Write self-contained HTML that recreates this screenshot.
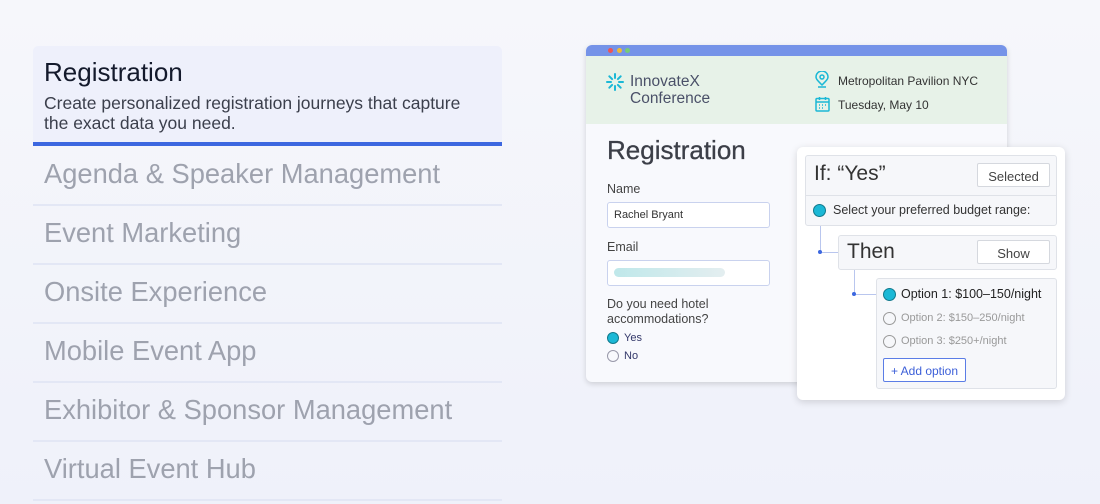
<!DOCTYPE html>
<html><head><style>
*{box-sizing:border-box;margin:0;padding:0}
body{width:1100px;height:504px;overflow:hidden;background:linear-gradient(180deg,#f6f7fb,#eff1fa);font-family:"Liberation Sans",sans-serif;position:relative}
.a{position:absolute}
.item{position:absolute;left:33px;width:469px;height:59px;border-bottom:2px solid #e3e7f5;color:#9ea2ae;font-size:27.3px;padding:11px 0 0 11px}
.box{position:absolute;background:#f6f7fa;border:1px solid #dfe2e8;border-radius:3px}
.btn{position:absolute;background:#fff;border:1px solid #d5d8de;border-radius:2px;font-size:13px;color:#444;text-align:center}
.r{position:absolute;width:13px;height:13px;border-radius:50%;border:1.5px solid #999}
.f{background:#1bb8d6;border-color:#11798c}
</style></head><body>
<div class="a" style="left:33px;top:46px;width:469px;height:100px;background:#eef0fb;border-radius:5px 5px 0 0;border-bottom:4px solid #3c67e0"></div>
<div class="a" style="left:44px;top:57px;font-size:26px;color:#141a2c">Registration</div>
<div class="a" style="left:44px;top:93px;font-size:17.5px;color:#3b3f4c;line-height:20px;width:430px">Create personalized registration journeys that capture the exact data you need.</div>
<div class="item" style="top:147px">Agenda &amp; Speaker Management</div>
<div class="item" style="top:206px">Event Marketing</div>
<div class="item" style="top:265px">Onsite Experience</div>
<div class="item" style="top:324px">Mobile Event App</div>
<div class="item" style="top:383px">Exhibitor &amp; Sponsor Management</div>
<div class="item" style="top:442px">Virtual Event Hub</div>

<div class="a" style="left:586px;top:45px;width:421px;height:337px;background:#f8f9fd;border-radius:6px;box-shadow:0 2px 6px rgba(0,0,0,.15);overflow:hidden">
 <div style="height:11px;background:#7593e8"></div>
 <div style="height:68px;background:#e7f2e8"></div>
</div>
<div class="a" style="left:608px;top:48px;width:5px;height:5px;border-radius:50%;background:#e55"></div>
<div class="a" style="left:617px;top:48px;width:5px;height:5px;border-radius:50%;background:#eb3"></div>
<div class="a" style="left:625px;top:48px;width:5px;height:5px;border-radius:50%;background:#7c7"></div>
<svg class="a" style="left:606px;top:73px" width="18" height="18" viewBox="0 0 18 18" stroke="#1bb8d6" stroke-width="2" stroke-linecap="round"><path d="M9 1v4M9 13v4M1 9h4M13 9h4M3.3 3.3l2.8 2.8M11.9 11.9l2.8 2.8M3.3 14.7l2.8-2.8M11.9 6.1l2.8-2.8"/></svg>
<div class="a" style="left:630px;top:73px;font-size:15.5px;line-height:17px;color:#4a5068">InnovateX<br>Conference</div>
<svg class="a" style="left:814px;top:71px" width="16" height="18" viewBox="0 0 16 18" fill="none" stroke="#1bb8d6" stroke-width="1.5"><path d="M8 14C4 10 2 8 2 6a6 6 0 0 1 12 0c0 2-2 4-6 8z"/><circle cx="8" cy="6" r="2"/><path d="M4 16h8"/></svg>
<div class="a" style="left:838px;top:74px;font-size:12px;color:#333">Metropolitan Pavilion NYC</div>
<svg class="a" style="left:815px;top:96px" width="15" height="16" viewBox="0 0 15 16" fill="none" stroke="#1bb8d6" stroke-width="1.5"><rect x="1" y="2.5" width="13" height="12.5" rx="1"/><path d="M1 6h13M4.5 1v3M10.5 1v3M4 9h1M7 9h1M10 9h1M4 12h1M7 12h1"/></svg>
<div class="a" style="left:838px;top:98px;font-size:12px;color:#333">Tuesday, May 10</div>
<div class="a" style="left:607px;top:135px;font-size:26px;color:#3c3f48;-webkit-text-stroke:0.3px #3c3f48">Registration</div>
<div class="a" style="left:607px;top:182px;font-size:12.5px;color:#444">Name</div>
<div class="a" style="left:607px;top:202px;width:163px;height:26px;background:#fff;border:1px solid #c9d2ee;border-radius:3px;font-size:11px;padding:6px 0 0 6px;color:#333">Rachel Bryant</div>
<div class="a" style="left:607px;top:240px;font-size:12.5px;color:#444">Email</div>
<div class="a" style="left:607px;top:260px;width:163px;height:26px;background:#fff;border:1px solid #c9d2ee;border-radius:3px"></div>
<div class="a" style="left:614px;top:268px;width:111px;height:9px;border-radius:5px;background:linear-gradient(90deg,#bfe8ea,#e4eef0)"></div>
<div class="a" style="left:607px;top:297px;font-size:12.5px;line-height:15px;color:#444">Do you need hotel<br>accommodations?</div>
<div class="r f" style="left:607px;top:332px;width:12px;height:12px"></div>
<div class="a" style="left:624px;top:332px;font-size:11px;color:#33386a">Yes</div>
<div class="r" style="left:607px;top:350px;width:12px;height:12px;border-color:#99a"></div>
<div class="a" style="left:624px;top:350px;font-size:11px;color:#33386a">No</div>

<div class="a" style="left:797px;top:147px;width:268px;height:253px;background:#fff;border-radius:6px;box-shadow:0 2px 8px rgba(0,0,0,.15)"></div>
<div class="box" style="left:805px;top:155px;width:252px;height:71px"></div>
<div class="a" style="left:805px;top:195px;width:252px;height:1px;background:#dfe2e8"></div>
<div class="a" style="left:814px;top:162px;font-size:21px;color:#333">If: “Yes”</div>
<div class="btn" style="left:977px;top:163px;width:73px;height:24px;padding-top:5px">Selected</div>
<div class="r f" style="left:813px;top:204px"></div>
<div class="a" style="left:833px;top:203px;font-size:12.5px;color:#333">Select your preferred budget range:</div>
<div class="a" style="left:820px;top:226px;width:1px;height:27px;background:#b9c6ee"></div>
<div class="a" style="left:820px;top:252px;width:18px;height:1px;background:#b9c6ee"></div>
<div class="a" style="left:818px;top:250px;width:4px;height:4px;border-radius:50%;background:#3c67e0"></div>
<div class="box" style="left:838px;top:235px;width:219px;height:35px"></div>
<div class="a" style="left:847px;top:240px;font-size:21px;color:#333">Then</div>
<div class="btn" style="left:977px;top:240px;width:73px;height:24px;padding-top:5px">Show</div>
<div class="a" style="left:854px;top:270px;width:1px;height:25px;background:#b9c6ee"></div>
<div class="a" style="left:854px;top:294px;width:22px;height:1px;background:#b9c6ee"></div>
<div class="a" style="left:852px;top:292px;width:4px;height:4px;border-radius:50%;background:#3c67e0"></div>
<div class="box" style="left:876px;top:278px;width:181px;height:111px"></div>
<div class="r f" style="left:883px;top:288px"></div>
<div class="a" style="left:901px;top:287px;font-size:12.5px;color:#222">Option 1: $100–150/night</div>
<div class="r" style="left:883px;top:312px"></div>
<div class="a" style="left:901px;top:312px;font-size:11px;color:#999">Option 2: $150–250/night</div>
<div class="r" style="left:883px;top:335px"></div>
<div class="a" style="left:901px;top:335px;font-size:11px;color:#999">Option 3: $250+/night</div>
<div class="a" style="left:883px;top:358px;width:83px;height:24px;background:#fff;border:1px solid #5b7de6;border-radius:2px;color:#3c5fd8;font-size:12px;text-align:center;padding-top:5px">+ Add option</div>
</body></html>
